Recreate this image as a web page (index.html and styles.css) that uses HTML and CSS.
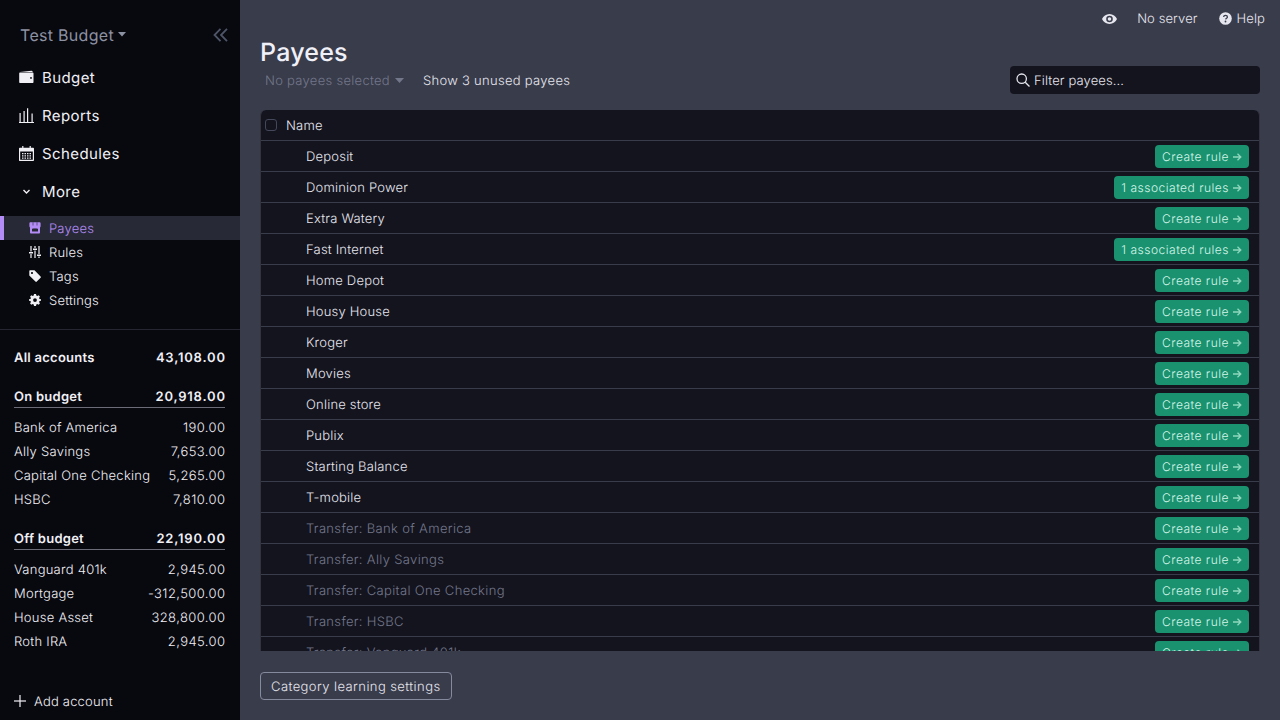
FILE: index.html
```html
<!DOCTYPE html>
<html lang="en">
<head>
<meta charset="UTF-8">
<title>Payees</title>
<link rel="stylesheet" href="styles.css">
</head>
<body>
<svg class="defs" width="0" height="0">
  <symbol id="arrow" viewBox="0 0 9 8"><path d="M0 4h7.500M4.500 .8 7.800 4 4.500 7.200" fill="none" stroke="currentColor" stroke-width="1.300"/></symbol>
</svg>
<div class="app">
  <aside class="sidebar">
    <div class="budget-title">
      <span class="budget-name">Test Budget</span>
      <svg class="caret" width="8" height="5" viewBox="0 0 8 5"><path d="M0 0h8L4 4.500z" fill="currentColor"/></svg>
      <svg class="collapse" width="15" height="14" viewBox="0 0 15 14" fill="none" stroke="currentColor" stroke-width="1.800"><path d="M7.500 .8 1.500 7l6 6.200M14 .8 8 7l6 6.200"/></svg>
    </div>
    <nav class="main-nav">
      <a class="nav-item">
        <svg width="15" height="15" viewBox="0 0 15 15" fill="currentColor"><path d="M1 2 12.500.8c.7 0 1.100.4 1.200 1.200H1z"/><path fill-rule="evenodd" d="M1.200 2.500h12.300c.6 0 1 .4 1 1v8.500c0 .6-.4 1-1 1H1.200c-.6 0-1-.4-1-1V3.500c0-.6.4-1 1-1zM12 7a.9.9 0 1 0 0 1.800A.9.900 0 0 0 12 7z"/></svg>
        <span>Budget</span>
      </a>
      <a class="nav-item">
        <svg width="15" height="15" viewBox="0 0 15 15" fill="currentColor"><path d="M0 14h15v1H0zM.5 5h1.200v9H.5zM4.500 3h1.200v11H4.500zM8 .3h1.200V14H8zM12.500 5.500h1.200V14h-1.200z"/></svg>
        <span>Reports</span>
      </a>
      <a class="nav-item">
        <svg width="15" height="15" viewBox="0 0 15 15" fill="currentColor"><path fill-rule="evenodd" d="M.8 1.800h2.400V0h1.200v1.800h6.200V0h1.200v1.800h2.400c.4 0 .8.300.8.700v11.800c0 .4-.4.700-.8.700H.8a.7.700 0 0 1-.8-.7V2.500c0-.4.400-.7.800-.7zm.4 3.700v8.300h12.600V5.500z"/><path d="M3 7h1.500v1.300H3zM5.500 7H7v1.300H5.500zM8 7h1.500v1.300H8zM10.500 7H12v1.300h-1.500zM3 9.200h1.500v1.300H3zM5.500 9.200H7v1.300H5.500zM8 9.200h1.500v1.300H8zM10.500 9.200H12v1.300h-1.500zM3 11.400h1.500v1.300H3zM5.500 11.400H7v1.300H5.500zM8 11.400h1.500v1.300H8zM10.500 11.400H12v1.300h-1.500z"/></svg>
        <span>Schedules</span>
      </a>
      <a class="nav-item">
        <svg class="more-chevron" width="15" height="15" viewBox="0 0 15 15" fill="none" stroke="currentColor" stroke-width="1.400"><path d="M4.500 6 7.500 9l3-3"/></svg>
        <span>More</span>
      </a>
    </nav>
    <nav class="sub-nav">
      <a class="sub-item selected">
        <svg width="12" height="12" viewBox="0 0 12 12" fill="currentColor"><path fill-rule="evenodd" d="M1.500.3h9c.6 0 1.100.5 1.100 1.100V4c0 .8-.3 1.300-.6 1.500v4.900c0 .6-.5 1.100-1.100 1.100H2.100c-.6 0-1.100-.5-1.100-1.100V5.500C.7 5.300.4 4.800.4 4V1.400C.4.800.9.300 1.500.3zM3 6.500v3h6v-3c-.8.3-1.500.2-2-.2-.6.4-1.400.4-2 0-.5.4-1.200.5-2 .2z"/><path d="M4 .3v3.200M8 .3v3.200" stroke="#272936" stroke-width=".6"/></svg>
        <span>Payees</span>
      </a>
      <a class="sub-item">
        <svg width="12" height="12" viewBox="0 0 12 12" fill="currentColor"><path d="M1.400 0h1.200v5.500H1.400zM0 6h4v1.500H0zM1.400 8h1.200v4H1.400zM5.400 0h1.200v2H5.400zM4 2.500h4V4H4zM5.400 4.500h1.200V12H5.400zM9.400 0h1.200v8H9.400zM8 8.500h4V10H8zM9.400 10.500h1.200V12H9.400z"/></svg>
        <span>Rules</span>
      </a>
      <a class="sub-item">
        <svg width="12" height="12" viewBox="0 0 12 12" fill="currentColor"><path fill-rule="evenodd" d="M.3 1.300c0-.6.400-1 1-1H5.500L11.600 6.400c.4.400.4 1 0 1.400L7.800 11.600c-.4.400-1 .4-1.400 0L.3 5.500zM3 1.900a1.100 1.100 0 1 0 0 2.200 1.100 1.100 0 0 0 0-2.200z"/></svg>
        <span>Tags</span>
      </a>
      <a class="sub-item">
        <svg width="12" height="12" viewBox="0 0 12 12" fill="currentColor"><path fill-rule="evenodd" d="M5 .1h2l.3 1.500 1 .4L9.600 1.200 10.900 2.600l-.8 1.300.4 1 1.500.3v1.600l-1.500.3-.4 1 .8 1.300-1.300 1.400-1.300-.8-1 .4-.3 1.500H5l-.3-1.500-1-.4-1.300.8-1.300-1.400.8-1.300-.4-1-1.500-.3V5.200l1.500-.3.4-1-.8-1.300L2.400 1.200l1.300.8 1-.4zM6 4.200a1.900 1.900 0 1 0 0 3.800 1.900 1.900 0 0 0 0-3.800z"/></svg>
        <span>Settings</span>
      </a>
    </nav>
    <div class="accounts">
      <div class="acct-row acct-all"><span>All accounts</span><span class="total">43,108.00</span></div>
      <div class="acct-row acct-head"><span>On budget</span><span class="total">20,918.00</span></div>
      <div class="acct-row"><span>Bank of America</span><span class="amount">190.00</span></div>
      <div class="acct-row"><span>Ally Savings</span><span class="amount">7,653.00</span></div>
      <div class="acct-row"><span>Capital One Checking</span><span class="amount">5,265.00</span></div>
      <div class="acct-row"><span>HSBC</span><span class="amount">7,810.00</span></div>
      <div class="acct-row acct-head off"><span>Off budget</span><span class="total">22,190.00</span></div>
      <div class="acct-row"><span>Vanguard 401k</span><span class="amount">2,945.00</span></div>
      <div class="acct-row"><span>Mortgage</span><span class="amount">-312,500.00</span></div>
      <div class="acct-row"><span>House Asset</span><span class="amount">328,800.00</span></div>
      <div class="acct-row"><span>Roth IRA</span><span class="amount">2,945.00</span></div>
    </div>
    <div class="add-account">
      <svg width="12" height="12" viewBox="0 0 12 12" fill="currentColor"><path d="M5.400 0h1.200v12H5.400z"/><path d="M0 5.400h12v1.200H0z"/></svg>
      <span>Add account</span>
    </div>
  </aside>

  <main class="content">
    <div class="topbar">
      <svg class="eye" width="15" height="10" viewBox="0 0 15 10" fill="currentColor"><path fill-rule="evenodd" d="M7.500 0C11 0 13.700 2.300 15 5c-1.300 2.700-4 5-7.500 5S1.300 7.700 0 5C1.300 2.300 4 0 7.500 0zm0 1.700a3.300 3.300 0 1 0 0 6.600 3.300 3.300 0 0 0 0-6.600zm0 1.500a1.800 1.800 0 1 1 0 3.600 1.800 1.800 0 0 1 0-3.600z"/></svg>
      <span class="server">No server</span>
      <span class="help">
        <svg width="13" height="13" viewBox="0 0 13 13"><circle cx="6.500" cy="6.500" r="6.300" fill="currentColor"/><path d="M4.600 5c.1-1.100.9-1.600 1.900-1.600s1.900.6 1.900 1.500c0 1.300-1.500 1.300-1.800 2.500" fill="none" stroke="#393c4b" stroke-width="1.300"/><circle cx="6.500" cy="9.500" r=".9" fill="#393c4b"/></svg>
        Help
      </span>
    </div>
    <h1 class="page-title">Payees</h1>
    <div class="toolbar">
      <span class="bulk-menu"><span class="bulk-label">No payees selected</span>
        <svg width="9" height="5" viewBox="0 0 9 5"><path d="M0 0h9L4.500 5z" fill="currentColor"/></svg>
      </span>
      <span class="show-unused">Show 3 unused payees</span>
      <div class="filter">
        <svg width="14" height="14" viewBox="0 0 14 14" fill="none" stroke="currentColor" stroke-width="1.300"><circle cx="5.700" cy="5.700" r="4.700"/><path d="m9.200 9.200 4.300 4.300"/></svg>
        <span>Filter payees...</span>
      </div>
    </div>
    <div class="table">
      <div class="table-head">
        <span class="check"></span>
        <span class="col-name">Name</span>
      </div>
      <div class="row"><span class="payee">Deposit</span><a class="rule-btn">Create rule<svg class="arrow"><use href="#arrow"/></svg></a></div>
      <div class="row"><span class="payee">Dominion Power</span><a class="rule-btn">1 associated rules<svg class="arrow"><use href="#arrow"/></svg></a></div>
      <div class="row"><span class="payee">Extra Watery</span><a class="rule-btn">Create rule<svg class="arrow"><use href="#arrow"/></svg></a></div>
      <div class="row"><span class="payee">Fast Internet</span><a class="rule-btn">1 associated rules<svg class="arrow"><use href="#arrow"/></svg></a></div>
      <div class="row"><span class="payee">Home Depot</span><a class="rule-btn">Create rule<svg class="arrow"><use href="#arrow"/></svg></a></div>
      <div class="row"><span class="payee">Housy House</span><a class="rule-btn">Create rule<svg class="arrow"><use href="#arrow"/></svg></a></div>
      <div class="row"><span class="payee">Kroger</span><a class="rule-btn">Create rule<svg class="arrow"><use href="#arrow"/></svg></a></div>
      <div class="row"><span class="payee">Movies</span><a class="rule-btn">Create rule<svg class="arrow"><use href="#arrow"/></svg></a></div>
      <div class="row"><span class="payee">Online store</span><a class="rule-btn">Create rule<svg class="arrow"><use href="#arrow"/></svg></a></div>
      <div class="row"><span class="payee">Publix</span><a class="rule-btn">Create rule<svg class="arrow"><use href="#arrow"/></svg></a></div>
      <div class="row"><span class="payee">Starting Balance</span><a class="rule-btn">Create rule<svg class="arrow"><use href="#arrow"/></svg></a></div>
      <div class="row"><span class="payee">T-mobile</span><a class="rule-btn">Create rule<svg class="arrow"><use href="#arrow"/></svg></a></div>
      <div class="row transfer"><span class="payee">Transfer: Bank of America</span><a class="rule-btn">Create rule<svg class="arrow"><use href="#arrow"/></svg></a></div>
      <div class="row transfer"><span class="payee">Transfer: Ally Savings</span><a class="rule-btn">Create rule<svg class="arrow"><use href="#arrow"/></svg></a></div>
      <div class="row transfer"><span class="payee">Transfer: Capital One Checking</span><a class="rule-btn">Create rule<svg class="arrow"><use href="#arrow"/></svg></a></div>
      <div class="row transfer"><span class="payee">Transfer: HSBC</span><a class="rule-btn">Create rule<svg class="arrow"><use href="#arrow"/></svg></a></div>
      <div class="row transfer"><span class="payee">Transfer: Vanguard 401k</span><a class="rule-btn">Create rule<svg class="arrow"><use href="#arrow"/></svg></a></div>
    </div>
    <div class="footer">
      <button class="learn-btn">Category learning settings</button>
    </div>
  </main>
</div>
</body>
</html>
```

FILE: styles.css
```css
* {margin: 0; padding: 0; box-sizing: border-box;}
html, body {height: 100%; overflow: hidden;}
body {font-family: Inter, "Liberation Sans", sans-serif; font-size: 13px; font-weight: 350; line-height: 16px; letter-spacing: .2px; text-rendering: geometricPrecision; background: #393c4b; color: #e6e6ee;}
a {display: flex; align-items: center;}
.defs {position: absolute;}

.app {display: flex; height: 720px;}

/* sidebar */
.sidebar {width: 240px; flex: none; background: #08080f; color: #f0f0f5; display: flex; flex-direction: column;}
.budget-title {display: flex; align-items: center; height: 35px; margin-top: 17px; padding: 0 12px 0 20px; color: #8d92a3;}
.budget-name {font-size: 16px; font-weight: 400; letter-spacing: .3px;}
.caret {margin-left: 4px;}
.collapse {margin-left: auto; color: #4e5568;}
.main-nav {margin-top: 6px;}
.nav-item {height: 38px; padding-left: 19px; gap: 8px; font-size: 15px; font-weight: 400; letter-spacing: .4px;}
.nav-item span, .sub-item span, .acct-row span, .add-account span {padding-top: 2px;}
.main-nav svg {flex: none;}
.sub-nav {margin-top: 6px; padding-bottom: 17px; border-bottom: 1px solid #262633;}
.sub-item {height: 24px; gap: 8px; border-left: 4px solid transparent; padding-left: 25px;}
.sub-item.selected {background: #272936; border-left-color: #b38cf5; color: #b38cf5;}

.accounts {padding: 15px 15px 0 14px; flex: 1;}
.acct-row {display: flex; justify-content: space-between; height: 24px; align-items: center; letter-spacing: .25px;}
.acct-all {font-weight: 600; margin-bottom: 16px;}
.acct-head {font-weight: 600; border-bottom: 1px solid #6c6c78; height: 23px; margin-bottom: 7px; padding-bottom: 1px;}
.acct-head.off {margin-top: 16px;}
.total {letter-spacing: .8px; margin-right: -.8px;}
.amount {letter-spacing: .4px; margin-right: -.4px;}
.add-account {display: flex; align-items: center; gap: 8px; height: 38px; padding-left: 14px;}

/* main */
.content {flex: 1; min-width: 0; padding: 0 20px; display: flex; flex-direction: column;}
.topbar {display: flex; justify-content: flex-end; align-items: center; height: 37px; margin-right: -5px; letter-spacing: .1px;}
.eye {margin-right: 20px;}
.server {margin-right: 21px;}
.help {display: flex; align-items: center; gap: 5px;}
.page-title {font-size: 25px; font-weight: 450; line-height: 30px; padding-top: 1px; margin-bottom: -1px; color: #f0f0f8;}
.toolbar {display: flex; align-items: center; height: 28px; margin-bottom: 16px; margin-top: -1px; letter-spacing: .29px;}
.bulk-menu {display: flex; align-items: center; gap: 5px; padding-left: 5px; color: #73778a;}
.bulk-label, .show-unused, .filter span, .col-name {padding-top: 2px;}
.show-unused {margin-left: 19px;}
.filter {margin-left: auto; width: 250px; height: 28px; background: #14141f; border-radius: 4px; display: flex; align-items: center; gap: 4px; padding-left: 6px; letter-spacing: .12px;}

.table {height: 541px; overflow: hidden; background: #14141f; border-radius: 6px 6px 0 0; border-left: 1px solid #33333f; border-right: 1px solid #33333f;}
.table-head {display: flex; align-items: center; height: 31px; gap: 9px; padding-left: 4px; border-bottom: 1px solid #393c4b;}
.check {width: 12px; height: 12px; border: 1px solid #45475a; border-radius: 3px;}
.row {display: flex; align-items: center; justify-content: space-between; height: 31px; padding: 1px 10px 0 45px; border-bottom: 1px solid #393c4b;}
.payee {padding-top: 1px;}
.row.transfer .payee {color: #73778a; letter-spacing: .34px;}
.rule-btn {height: 23px; padding: 0 7px; background: #1a9270; color: #d5f5e8; border-radius: 4px; font-size: 12px; letter-spacing: .5px;}
.arrow {width: 9px; height: 8px; margin-left: 4px; color: #8fd8bd;}

.footer {height: 69px; padding-top: 21px;}
.learn-btn {height: 28px; padding: 1px 10px 0; background: transparent; border: 1px solid #858a9c; border-radius: 4px; color: #e6e6ee; font: inherit; letter-spacing: .42px; text-rendering: inherit;}
```
